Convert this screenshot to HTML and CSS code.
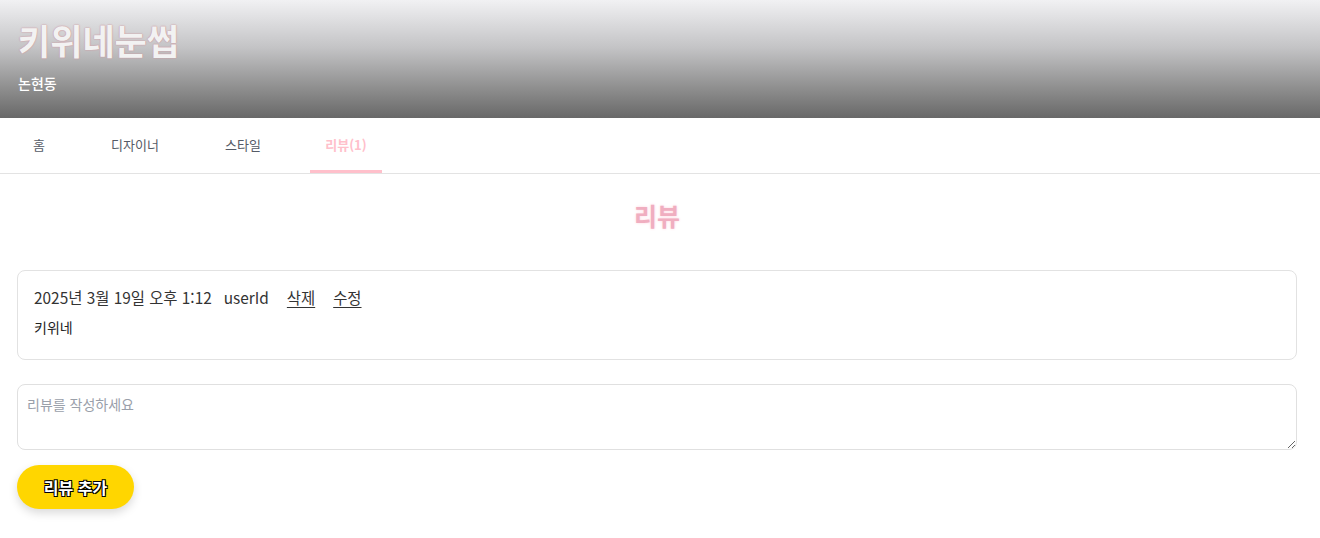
FILE: index.html
```html
<!DOCTYPE html>
<html lang="ko">
<head>
    <meta charset="UTF-8">
    <title>키위네눈썹 - 리뷰</title>
    <link rel="stylesheet" href="styles.css">
</head>
<body>
    <header class="shop-header">
        <h1 class="shop-name">키위네눈썹</h1>
        <p class="shop-location">논현동</p>
    </header>

    <nav class="tabs">
        <a class="tab">홈</a>
        <a class="tab">디자이너</a>
        <a class="tab">스타일</a>
        <a class="tab active">리뷰(1)</a>
    </nav>

    <main class="review-section">
        <h2 class="review-title">리뷰</h2>

        <div class="review-card">
            <div class="review-meta">
                <span>2025년 3월 19일 오후 1:12</span>
                <span class="review-user">userId</span>
                <a class="review-link">삭제</a>
                <a class="review-link">수정</a>
            </div>
            <p class="review-text">키위네</p>
        </div>

        <textarea class="review-input" placeholder="리뷰를 작성하세요"></textarea>

        <button class="add-btn">리뷰 추가</button>
    </main>
</body>
</html>
```

FILE: styles.css
```css
body {
    margin: 0;
    font-family: "Noto Sans CJK KR", "Noto Sans", sans-serif;
    background-color: #fff;
    color: #333;
}

.shop-header {
    height: 118px;
    box-sizing: border-box;
    padding: 16px 18px 0;
    background: linear-gradient(to bottom, #f1f1f3 0%, #c4c4c6 40%, #8e8e8e 75%, #686868 100%);
}

.shop-name {
    margin: 0;
    font-size: 35px;
    line-height: 48px;
    font-weight: 700;
    color: #f2f2f2;
    text-shadow: 0 0 2px #d8a0a8, 0 0 1px #b08088;
}

.shop-location {
    margin: 9px 0 0;
    font-size: 14px;
    font-weight: 500;
    color: #fff;
}

.tabs {
    display: flex;
    height: 55px;
    border-bottom: 1px solid #e3e3e3;
}

.tab {
    display: flex;
    align-items: center;
    justify-content: center;
    height: 100%;
    box-sizing: border-box;
    font-size: 13px;
    color: #555b66;
    padding: 0 0 2px;
}

.tab:nth-child(1) { width: 78px; }
.tab:nth-child(2) { width: 114px; }
.tab:nth-child(3) { width: 102px; }
.tab:nth-child(4) {
    width: 72px;
    margin-left: 16px;
}

.tab.active {
    color: #ffc0cb;
    font-weight: 700;
    border-bottom: 3px solid #ffc0cb;
    padding-bottom: 0;
}

.review-section {
    padding: 0 17px 20px 17px;
    max-width: 1280px;
}

.review-title {
    margin: 24px 0 38px;
    text-align: center;
    font-size: 25px;
    line-height: 34px;
    font-weight: 700;
    color: #f0aec0;
    text-shadow: 0 0 3px #ffd6e0;
}

.review-card {
    border: 1px solid #e2e2e2;
    border-radius: 8px;
    padding: 15px 16px 18px;
    height: 90px;
    box-sizing: border-box;
}

.review-meta {
    display: flex;
    align-items: center;
    font-size: 15.4px;
    color: #333;
    line-height: 22px;
}

.review-user {
    margin-left: 12px;
}

.review-link {
    margin-left: 18px;
    text-decoration: underline;
    text-underline-offset: 3px;
}

.review-text {
    margin: 9px 0 0;
    font-size: 14px;
    color: #222;
}

.review-input {
    display: block;
    width: 100%;
    height: 66px;
    box-sizing: border-box;
    margin-top: 24px;
    padding: 9px 9px;
    border: 1px solid #e0e0e0;
    border-radius: 8px;
    font-family: inherit;
    font-size: 14px;
    resize: vertical;
}

.review-input::placeholder {
    color: #9aa0aa;
}

.add-btn {
    display: block;
    margin-top: 15px;
    height: 44px;
    width: 117px;
    border: none;
    border-radius: 22px;
    background-color: #ffd600;
    color: #fff;
    font-family: inherit;
    font-size: 16px;
    font-weight: 700;
    text-shadow: -1px -1px 0 #000, 1px -1px 0 #000, -1px 1px 0 #000, 1px 1px 0 #000;
    box-shadow: 0 4px 10px rgba(0, 0, 0, 0.15);
    cursor: pointer;
}
```
